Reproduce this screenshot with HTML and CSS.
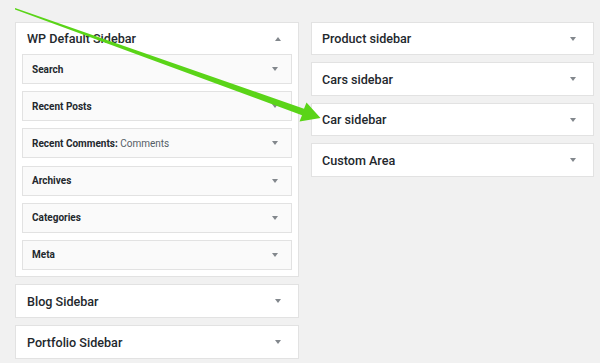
FILE: index.html
```html
<!DOCTYPE html>
<html>
<head>
    <link rel="stylesheet" href="styles.css">
</head>
<body>
    <div class="areas">
        <div class="column">
            <div class="sidebar open">
                <div class="sidebar-head">
                    <span>WP Default Sidebar</span>
                    <span class="toggle up"></span>
                </div>
                <div class="widget"><span>Search</span><span class="toggle"></span></div>
                <div class="widget"><span>Recent Posts</span><span class="toggle"></span></div>
                <div class="widget"><span>Recent Comments: <em>Comments</em></span><span class="toggle"></span></div>
                <div class="widget"><span>Archives</span><span class="toggle"></span></div>
                <div class="widget"><span>Categories</span><span class="toggle"></span></div>
                <div class="widget"><span>Meta</span><span class="toggle"></span></div>
            </div>
            <div class="sidebar">
                <div class="sidebar-head"><span>Blog Sidebar</span><span class="toggle"></span></div>
            </div>
            <div class="sidebar">
                <div class="sidebar-head"><span>Portfolio Sidebar</span><span class="toggle"></span></div>
            </div>
        </div>

        <div class="column right">
            <div class="sidebar">
                <div class="sidebar-head"><span>Product sidebar</span><span class="toggle"></span></div>
            </div>
            <div class="sidebar">
                <div class="sidebar-head"><span>Cars sidebar</span><span class="toggle"></span></div>
            </div>
            <div class="sidebar">
                <div class="sidebar-head"><span>Car sidebar</span><span class="toggle"></span></div>
            </div>
            <div class="sidebar">
                <div class="sidebar-head"><span>Custom Area</span><span class="toggle"></span></div>
            </div>
        </div>
    </div>

    <!-- pointer drawn over the page -->
    <svg class="pointer" width="600" height="363" viewBox="0 0 600 363">
        <polygon points="15,8 304,108.8 306.5,102.5 320.5,118 299.5,121.5 302,115.2 15,9.6" fill="#5ad418"/>
    </svg>
</body>
</html>
```

FILE: styles.css
```css
body {
    margin: 0;
    background: #f1f1f1;
    color: #23282d;
    font-family: Roboto, 'Liberation Sans', sans-serif;
}
.areas {
    display: flex;
    gap: 12px;
    padding: 22px 0 0 15px;
}
.column {
    display: flex;
    flex-direction: column;
    gap: 7.5px;
    width: 284px;
}
.column.right {
    width: 283px;
    gap: 7.3px;
}
.sidebar {
    background: #fff;
    border: 1px solid #e2e2e2;
}
.sidebar-head {
    display: flex;
    justify-content: space-between;
    align-items: center;
    height: 31.5px;
    padding: 0 17px 0 11px;
    font-size: 12.6px;
    font-weight: 500;
}
.right .sidebar-head {
    height: 31.2px;
    padding-left: 10px;
}
.open {
    padding: 0 6px 6px;
}
.open .sidebar-head {
    height: 31px;
    padding: 0 11px 0 5px;
}
.widget {
    display: flex;
    justify-content: space-between;
    align-items: center;
    height: 28px;
    margin-top: 7.2px;
    padding: 0 13px 0 9px;
    background: #fafafa;
    border: 1px solid #e2e2e2;
    font-size: 10px;
    font-weight: bold;
}
.open .sidebar-head + .widget { margin-top: 0; }
.widget em {
    font-style: normal;
    font-weight: normal;
    color: #555d66;
}
.toggle {
    width: 0;
    height: 0;
    border-left: 3px solid transparent;
    border-right: 3px solid transparent;
    border-top: 4px solid #82878c;
}
.toggle.up {
    border-top: none;
    border-bottom: 4px solid #82878c;
}
.pointer {
    position: absolute;
    top: 0;
    left: 0;
}
```
